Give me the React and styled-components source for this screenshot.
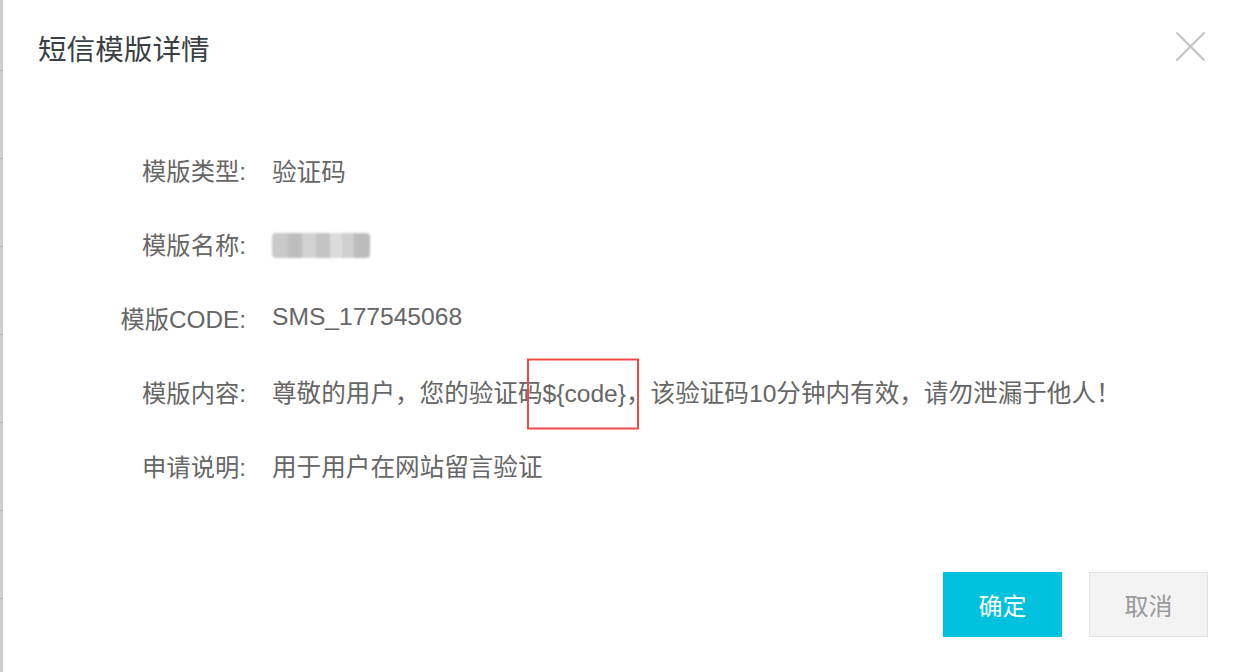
import React from "react";
import styled, { createGlobalStyle } from "styled-components";

const GlobalStyle = createGlobalStyle`
  html, body {
    margin: 0;
    padding: 0;
    background: #fff;
  }
  body {
    font-family: "Liberation Sans", "Noto Sans CJK SC", sans-serif;
    -webkit-font-smoothing: antialiased;
  }
`;

const Page = styled.div`
  display: flex;
  width: 1240px;
  height: 672px;
  overflow: hidden;
`;

// the edge of the page underneath the dialog
const Backdrop = styled.div`
  width: 3px;
  flex-shrink: 0;
  background-color: #cdcdcd;
  background-image: repeating-linear-gradient(
    to bottom,
    transparent 0,
    transparent 70px,
    #b4b4b4 70px,
    #b4b4b4 71px,
    transparent 71px,
    transparent 88px
  );
`;

const Dialog = styled.div`
  flex: 1;
  display: flex;
  flex-direction: column;
  background: #fff;
`;

const Header = styled.div`
  display: flex;
  justify-content: space-between;
  align-items: center;
  height: 96px;
  padding: 0 34px 0 35px;
`;

const Title = styled.h2`
  margin: 4px 0 0;
  font-size: 28.6px;
  font-weight: normal;
  color: #3a3f44;
  line-height: 1;
`;

const CloseButton = styled.button`
  display: flex;
  align-items: center;
  justify-content: center;
  width: 32px;
  height: 32px;
  padding: 0;
  margin-bottom: 4px;
  border: none;
  background: none;
  cursor: pointer;
`;

const Body = styled.div`
  display: grid;
  grid-template-columns: 243px 1fr;
  column-gap: 26px;
  grid-auto-rows: 73.8px;
  align-items: center;
  padding-top: 37px;
  font-size: 24.6px;
`;

const Label = styled.div`
  text-align: right;
  color: #666;
  white-space: nowrap;
  font-size: 24.3px;
`;

const Value = styled.div`
  color: #666;
  white-space: nowrap;
`;

const Blurred = styled.div`
  display: inline-flex;
  height: 25px;
  vertical-align: middle;
  filter: blur(1.2px);
  border-radius: 4px;
  overflow: hidden;
`;

const Block = styled.span`
  width: ${(p) => p.$w}px;
  height: 100%;
  background: ${(p) => p.$c};
`;

const Marked = styled.span`
  position: relative;

  &::after {
    content: "";
    position: absolute;
    left: -16px;
    right: -13px;
    top: 50%;
    height: 71px;
    transform: translateY(-50%);
    border: 2px solid #ef4a4a;
    box-sizing: border-box;
  }
`;

const Footer = styled.div`
  display: flex;
  justify-content: flex-end;
  gap: 27px;
  padding: 70px 32px 0 0;
`;

const Button = styled.button`
  width: 119px;
  height: 65px;
  padding: 0;
  font-family: inherit;
  font-size: 24px;
  border: 1px solid ${(p) => (p.$primary ? "#00c1de" : "#e3e3e3")};
  background: ${(p) => (p.$primary ? "#00c1de" : "#f3f3f3")};
  color: ${(p) => (p.$primary ? "#fff" : "#999")};
  cursor: pointer;
`;

const nameBlocks = [
  { w: 16, c: "#c9c9c9" },
  { w: 14, c: "#bdbdbd" },
  { w: 14, c: "#d2d2d2" },
  { w: 14, c: "#c3c3c3" },
  { w: 12, c: "#dcdcdc" },
  { w: 12, c: "#cfcfcf" },
  { w: 16, c: "#bcbcbc" },
];

export default function App() {
  return (
    <>
      <GlobalStyle />
      <Page>
        <Backdrop />
        <Dialog>
          <Header>
            <Title>短信模版详情</Title>
            <CloseButton aria-label="关闭">
              <svg width="31" height="31" viewBox="0 0 31 31">
                <path
                  d="M1.5 1.5 L29.5 29.5 M29.5 1.5 L1.5 29.5"
                  stroke="#c4c4c4"
                  strokeWidth="2.2"
                  fill="none"
                />
              </svg>
            </CloseButton>
          </Header>
          <Body>
            <Label>模版类型:</Label>
            <Value>验证码</Value>

            <Label>模版名称:</Label>
            <Value>
              <Blurred>
                {nameBlocks.map((b, i) => (
                  <Block key={i} $w={b.w} $c={b.c} />
                ))}
              </Blurred>
            </Value>

            <Label>模版CODE:</Label>
            <Value>SMS_177545068</Value>

            <Label>模版内容:</Label>
            <Value>
              尊敬的用户，您的验证码<Marked>{"${code}"}</Marked>
              ，该验证码10分钟内有效，请勿泄漏于他人！
            </Value>

            <Label>申请说明:</Label>
            <Value>用于用户在网站留言验证</Value>
          </Body>
          <Footer>
            <Button $primary>确定</Button>
            <Button>取消</Button>
          </Footer>
        </Dialog>
      </Page>
    </>
  );
}
